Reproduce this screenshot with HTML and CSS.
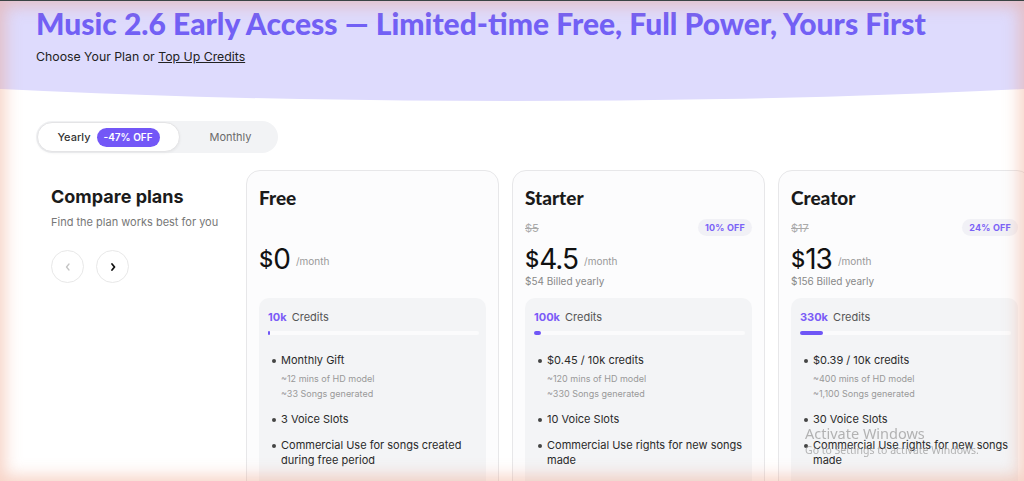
FILE: index.html
```html
<!DOCTYPE html>
<html lang="en">
<head>
    <meta charset="UTF-8">
    <meta name="viewport" content="width=device-width, initial-scale=1.0">
    <title>Pricing</title>
    <link rel="stylesheet" href="styles.css">
</head>
<body>
    <header class="hero">
        <h1>Music 2.6 Early Access — Limited-time Free, Full Power, Yours First</h1>
        <p class="hero-sub">Choose Your Plan or <a href="#">Top Up Credits</a></p>
    </header>

    <main class="pricing">
        <div class="toggle">
            <div class="toggle-option active">
                <span>Yearly</span>
                <span class="toggle-badge">-47% OFF</span>
            </div>
            <div class="toggle-option">Monthly</div>
        </div>

        <div class="plans">
            <div class="compare">
                <h2>Compare plans</h2>
                <p>Find the plan works best for you</p>
                <div class="arrows">
                    <button class="arrow disabled">
                        <svg width="10" height="10" viewBox="0 0 10 10"><path d="M6 2 L3.5 5 L6 8" fill="none" stroke="#c4c4c4" stroke-width="1.3" stroke-linecap="round" stroke-linejoin="round"/></svg>
                    </button>
                    <button class="arrow">
                        <svg width="10" height="10" viewBox="0 0 10 10"><path d="M4 2 L6.5 5 L4 8" fill="none" stroke="#111" stroke-width="1.8" stroke-linecap="round" stroke-linejoin="round"/></svg>
                    </button>
                </div>
            </div>

            <div class="card">
                <h3 class="plan-name">Free</h3>
                <div class="old-row empty"><span class="old-price">$0</span></div>
                <div class="price"><span class="cur">$</span><span class="amount">0</span><span class="per">/month</span></div>
                <div class="billed empty">$0 Billed yearly</div>
                <div class="credits">
                    <div class="credits-head"><b>10k</b> Credits</div>
                    <div class="bar"><div class="fill" style="width: 1%"></div></div>
                    <ul class="features">
                        <li>Monthly Gift
                            <div class="sub">~12 mins of HD model</div>
                            <div class="sub">~33 Songs generated</div>
                        </li>
                        <li>3 Voice Slots</li>
                        <li>Commercial Use for songs created during free period</li>
                    </ul>
                </div>
            </div>

            <div class="card">
                <h3 class="plan-name">Starter</h3>
                <div class="old-row"><span class="old-price">$5</span><span class="off">10% OFF</span></div>
                <div class="price"><span class="cur">$</span><span class="amount">4.5</span><span class="per">/month</span></div>
                <div class="billed">$54 Billed yearly</div>
                <div class="credits">
                    <div class="credits-head"><b>100k</b> Credits</div>
                    <div class="bar"><div class="fill" style="width: 3.5%"></div></div>
                    <ul class="features">
                        <li>$0.45 / 10k credits
                            <div class="sub">~120 mins of HD model</div>
                            <div class="sub">~330 Songs generated</div>
                        </li>
                        <li>10 Voice Slots</li>
                        <li>Commercial Use rights for new songs made</li>
                    </ul>
                </div>
            </div>

            <div class="card">
                <h3 class="plan-name">Creator</h3>
                <div class="old-row"><span class="old-price">$17</span><span class="off">24% OFF</span></div>
                <div class="price"><span class="cur">$</span><span class="amount">13</span><span class="per">/month</span></div>
                <div class="billed">$156 Billed yearly</div>
                <div class="credits">
                    <div class="credits-head"><b>330k</b> Credits</div>
                    <div class="bar"><div class="fill" style="width: 11%"></div></div>
                    <ul class="features">
                        <li>$0.39 / 10k credits
                            <div class="sub">~400 mins of HD model</div>
                            <div class="sub">~1,100 Songs generated</div>
                        </li>
                        <li>30 Voice Slots</li>
                        <li>Commercial Use rights for new songs made</li>
                    </ul>
                </div>
            </div>
        </div>
    </main>

    <!-- Screen overlays -->
    <div class="watermark">
        <div class="wm-title">Activate Windows</div>
        <div class="wm-sub">Go to Settings to activate Windows.</div>
    </div>
    <div class="frame"></div>
</body>
</html>
```

FILE: styles.css
```css
* {
    box-sizing: border-box;
}
html, body {
    height: 100%;
}
body {
    margin: 0;
    font-family: Inter, "Noto Sans", sans-serif;
    color: #222;
    background-color: #fff;
    overflow: hidden;
}
/* Hero */
.hero {
    background-color: #dedbfd;
    height: 101px;
    padding: 5px 36px 0;
    clip-path: ellipse(1084px 101px at 50% 0);
}
.hero h1 {
    margin: 0;
    font-family: Lato, sans-serif;
    font-weight: 900;
    font-size: 30px;
    line-height: 36px;
    color: #7260f5;
    white-space: nowrap;
}
.hero-sub {
    margin: 8px 0 0;
    font-size: 12.3px;
    line-height: 16px;
    color: #222;
}
.hero-sub a {
    color: #222;
}
/* Main */
.pricing {
    padding: 20px 36px 0;
}
.toggle {
    display: flex;
    width: 242px;
    height: 32px;
    padding: 1px;
    background-color: #f2f3f5;
    border-radius: 16px;
}
.toggle-option {
    display: flex;
    align-items: center;
    justify-content: center;
    gap: 6px;
    flex: 1;
    padding-left: 4px;
    font-size: 11px;
    color: #6b6b6b;
}
.toggle-option.active {
    flex: 0 0 143px;
    padding-left: 0;
    background-color: #fff;
    border: 1px solid #e4e4e6;
    border-radius: 15px;
    color: #333;
    font-weight: 500;
    box-shadow: 0 1px 3px rgba(0,0,0,0.06);
}
.toggle-badge {
    background-color: #7357f7;
    color: #fff;
    font-size: 10px;
    font-weight: 600;
    padding: 3px 7px;
    border-radius: 10px;
    line-height: 13px;
}
.plans {
    display: flex;
    gap: 13px;
    margin-top: 17px;
}
.compare {
    flex: 0 0 197px;
    padding: 16px 0 0 15px;
}
.compare h2 {
    margin: 0;
    font-size: 18px;
    line-height: 22px;
    font-weight: 700;
    color: #1b1b1b;
}
.compare p {
    margin: 7px 0 0;
    font-size: 11px;
    color: #777;
}
.arrows {
    display: flex;
    gap: 12px;
    margin-top: 21px;
}
.arrow {
    width: 33px;
    height: 33px;
    border-radius: 50%;
    border: 1px solid #e8e8e8;
    background-color: #fff;
    display: flex;
    align-items: center;
    justify-content: center;
    padding: 0;
}
/* Cards */
.card {
    flex: 0 0 253px;
    height: 330px;
    border: 1px solid #e7e7e9;
    border-radius: 14px;
    background-color: #fcfcfd;
    padding: 15px 12px 0;
}
.plan-name {
    margin: 0;
    font-family: Lato, sans-serif;
    font-weight: 900;
    font-size: 19px;
    line-height: 24px;
    color: #1a1a1a;
}
.old-row {
    display: flex;
    justify-content: space-between;
    align-items: center;
    height: 17px;
    margin-top: 9px;
}
.old-price {
    font-size: 11px;
    color: #aaa;
    text-decoration: line-through;
}
.off {
    background-color: #f1f1f6;
    color: #7a62f6;
    font-size: 9px;
    font-weight: 700;
    padding: 3px 7px;
    border-radius: 9px;
    letter-spacing: 0.2px;
}
.empty {
    visibility: hidden;
}
.price {
    display: flex;
    align-items: center;
    height: 31px;
    margin-top: 7px;
    color: #111;
}
.cur {
    font-size: 22px;
    font-weight: 500;
}
.amount {
    font-size: 28px;
    letter-spacing: -1px;
}
.per {
    margin-left: 6px;
    padding-top: 4px;
    font-size: 10px;
    color: #999;
}
.billed {
    font-size: 10px;
    line-height: 14px;
    color: #888;
}
.credits {
    margin-top: 10px;
    background-color: #f3f4f6;
    border-radius: 10px;
    padding: 12px 7px 20px 9px;
}
.credits-head {
    font-size: 11px;
    line-height: 14px;
    color: #555;
}
.credits-head b {
    color: #7b5cf7;
    font-weight: 700;
    margin-right: 2px;
}
.bar {
    margin-top: 7px;
    height: 4px;
    background-color: #fbfbfc;
    border-radius: 2px;
}
.fill {
    height: 4px;
    min-width: 2px;
    background-color: #6f56f6;
    border-radius: 2px;
}
.features {
    list-style: none;
    margin: 18px 0 0;
    padding: 0 0 0 13px;
}
.features li {
    position: relative;
    font-size: 11px;
    line-height: 15px;
    color: #2a2a2a;
    margin-bottom: 11px;
}
.features li::before {
    content: "";
    position: absolute;
    left: -9px;
    top: 6px;
    width: 4px;
    height: 4px;
    border-radius: 50%;
    background-color: #444;
}
.features .sub {
    font-size: 9px;
    line-height: 15px;
    color: #999;
}
.features li > .sub:nth-of-type(1) {
    margin-top: 3px;
}
/* Overlays */
.watermark {
    position: fixed;
    left: 805px;
    top: 424px;
    color: rgba(150,150,150,0.7);
    font-family: "Noto Sans", sans-serif;
    pointer-events: none;
}
.wm-title {
    font-size: 14.5px;
    line-height: 18px;
}
.wm-sub {
    font-size: 10.5px;
    line-height: 16px;
}
.frame {
    position: fixed;
    inset: 0;
    border-top: 1px solid #3a4444;
    box-shadow: inset 0 0 16px 5px rgba(236,150,120,0.42);
    pointer-events: none;
}
```
